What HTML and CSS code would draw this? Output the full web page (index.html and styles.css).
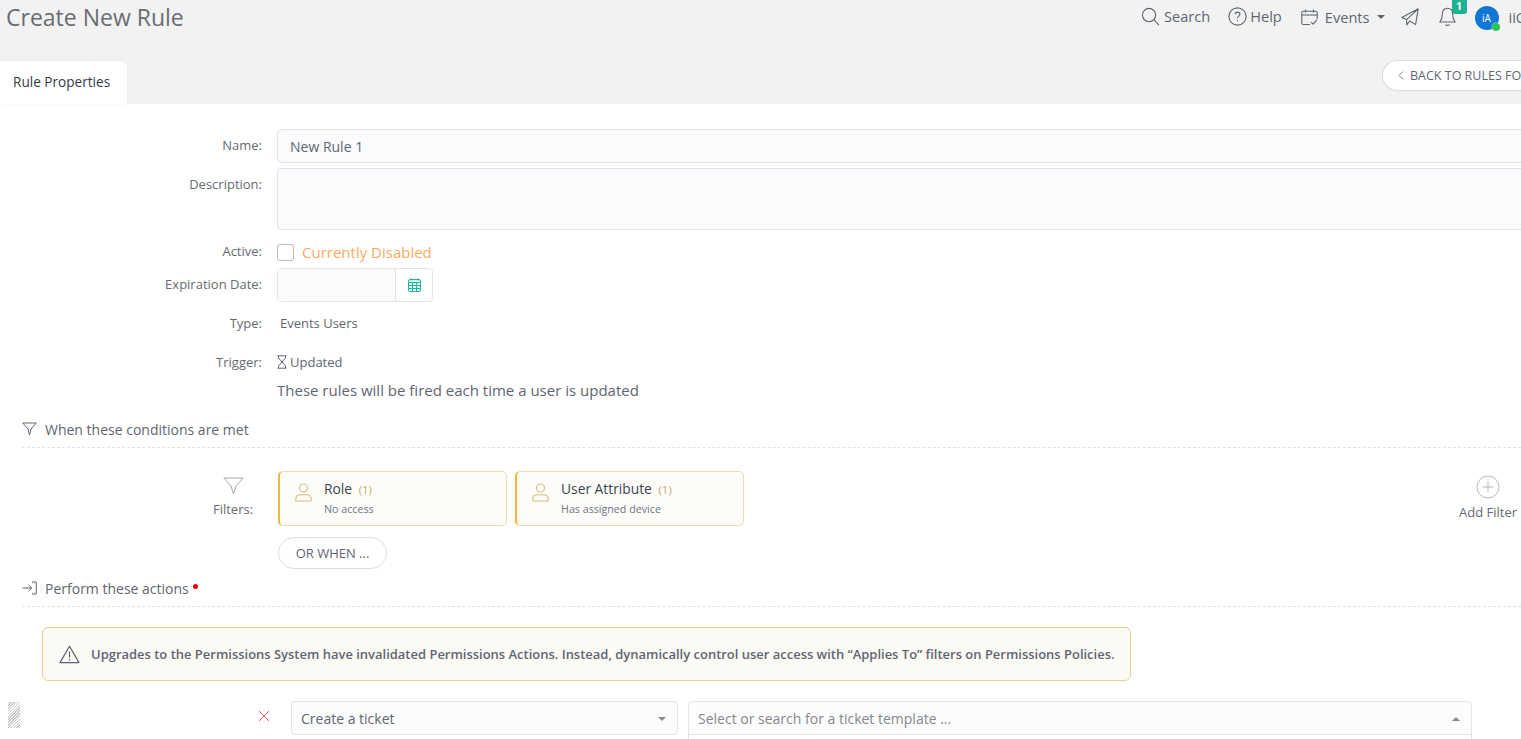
FILE: index.html
```html
<!DOCTYPE html>
<html lang="en">
<head>
  <meta charset="UTF-8" />
  <title>Create New Rule</title>
  <link rel="stylesheet" href="styles.css">
</head>
<body>
  <header class="topbar">
    <div class="title-row">
      <h1>Create New Rule</h1>
      <nav class="top-nav">
        <a class="nav-item nav-search">
          <svg width="19" height="19" viewBox="0 0 20 20" fill="none" stroke="#5f6672" stroke-width="1.2"><circle cx="8.5" cy="8.5" r="7"/><path d="M13.6 13.6 L19 19"/></svg>
          Search
        </a>
        <a class="nav-item nav-help">
          <svg width="19" height="19" viewBox="0 0 19 19" fill="none" stroke="#5f6672" stroke-width="1.1"><circle cx="9.5" cy="9.5" r="8.6"/><path d="M7.2 7.3 C7.2 4.4 11.9 4.4 11.9 7.3 C11.9 9.2 9.5 9.2 9.5 11.2"/><path d="M9.5 13 V14.2"/></svg>
          Help
        </a>
        <a class="nav-item nav-events">
          <svg width="17" height="17" viewBox="0 0 17 17" fill="none" stroke="#5f6672" stroke-width="1.1"><path d="M9 15.5 H2 A1.2 1.2 0 0 1 .8 14.3 V3.4 A1.2 1.2 0 0 1 2 2.2 H15 A1.2 1.2 0 0 1 16.2 3.4 V10"/><path d="M.8 6 H16.2"/><path d="M4.5 .5 V3.5 M12.5 .5 V3.5"/><path d="M10 13 L12 15.2 L16 10.8"/></svg>
          Events
          <span class="caret"></span>
        </a>
        <a class="nav-icon nav-send">
          <svg width="18" height="18" viewBox="0 0 18 18" fill="none" stroke="#5f6672" stroke-width="1.1" stroke-linejoin="round"><path d="M17.2 .8 L.8 9.6 L5.6 11.6 L17.2 .8 L14.6 16.6 L8.6 13 L5.8 16.8 L5.6 11.6"/></svg>
        </a>
        <a class="nav-icon nav-bell">
          <svg width="17" height="20" viewBox="0 0 17 20" fill="none" stroke="#5f6672" stroke-width="1.1" stroke-linejoin="round"><path d="M8.5 1.2 C4.8 1.2 3.4 4 3.4 7 C3.4 11 2.4 13 .8 15 H16.2 C14.6 13 13.6 11 13.6 7 C13.6 4 12.2 1.2 8.5 1.2 Z"/><path d="M6.4 17.6 C7.4 18.6 9.6 18.6 10.6 17.6"/></svg>
          <span class="badge">1</span>
        </a>
        <span class="avatar">iA<span class="status-dot"></span></span>
        <span class="user-name">iiQ Admin</span>
      </nav>
    </div>
    <div class="tab-row">
      <div class="tab">Rule Properties</div>
      <a class="back-btn">
        <svg width="6" height="9" viewBox="0 0 6 9" fill="none" stroke="#7a8290" stroke-width="1"><path d="M5 .5 L1 4.5 L5 8.5"/></svg>
        BACK TO RULES FOR EVENTS
      </a>
    </div>
  </header>

  <main class="content">
    <div class="form-row row-name">
      <label>Name:</label>
      <div class="text-input">New Rule 1</div>
    </div>
    <div class="form-row row-desc">
      <label>Description:</label>
      <div class="text-input text-area"></div>
    </div>
    <div class="form-row row-active">
      <label>Active:</label>
      <span class="checkbox"></span>
      <span class="disabled-text">Currently Disabled</span>
    </div>
    <div class="form-row row-date">
      <label>Expiration Date:</label>
      <div class="date-field">
        <span class="date-input"></span>
        <span class="date-btn">
          <svg width="13" height="14" viewBox="0 0 13 14" fill="#e3f6f2" stroke="#1fb5a0" stroke-width="1"><rect x=".5" y="1.5" width="12" height="12" rx="1.5"/><path d="M.5 4.5 H12.5 M.5 7.5 H12.5 M.5 10.5 H12.5 M4.5 4.5 V13.5 M8.5 4.5 V13.5"/><path d="M3 .3 V2.5 M10 .3 V2.5"/></svg>
        </span>
      </div>
    </div>
    <div class="form-row row-type">
      <label>Type:</label>
      <span class="plain-value">Events Users</span>
    </div>
    <div class="form-row row-trigger">
      <label>Trigger:</label>
      <span class="trigger-value">
        <svg width="10" height="14" viewBox="0 0 10 14" fill="none" stroke="#5f6672" stroke-width="1"><path d="M.5 .8 H9.5 M.5 13.2 H9.5"/><path d="M1.5 1 V3 L5 7 L8.5 3 V1"/><path d="M1.5 13 V11 L5 7 L8.5 11 V13"/></svg>
        Updated
      </span>
    </div>
    <p class="trigger-help">These rules will be fired each time a user is updated</p>

    <div class="section-head head-conditions">
      <svg width="15" height="14" viewBox="0 0 15 14" fill="none" stroke="#5f6672" stroke-width="1"><path d="M.8 1 H14.2 L9 7 L7.5 13 L6 7 Z"/></svg>
      When these conditions are met
    </div>

    <div class="filters-row">
      <div class="filters-label">
        <svg width="21" height="18" viewBox="0 0 21 18" fill="none" stroke="#a3a7ad" stroke-width="1"><path d="M.8 1 H20.2 L13 9 L10.5 17 L8 9 Z"/></svg>
        <span>Filters:</span>
      </div>
      <div class="filter-card">
        <svg class="person" width="17" height="19" viewBox="0 0 17 19" fill="none" stroke="#d8bd80" stroke-width="1.1"><circle cx="8.5" cy="5" r="4"/><path d="M.8 18 V16.2 C.8 13.4 3 11.8 5.5 11.8 H11.5 C14 11.8 16.2 13.4 16.2 16.2 V18 Z"/></svg>
        <div>
          <div class="card-title">Role <span class="card-count">(1)</span></div>
          <div class="card-sub">No access</div>
        </div>
      </div>
      <div class="filter-card">
        <svg class="person" width="17" height="19" viewBox="0 0 17 19" fill="none" stroke="#d8bd80" stroke-width="1.1"><circle cx="8.5" cy="5" r="4"/><path d="M.8 18 V16.2 C.8 13.4 3 11.8 5.5 11.8 H11.5 C14 11.8 16.2 13.4 16.2 16.2 V18 Z"/></svg>
        <div>
          <div class="card-title">User Attribute <span class="card-count">(1)</span></div>
          <div class="card-sub">Has assigned device</div>
        </div>
      </div>
      <div class="add-filter">
        <svg width="24" height="24" viewBox="0 0 24 24" fill="none" stroke="#b5b7ba" stroke-width="1"><circle cx="12" cy="12" r="11"/><path d="M12 6.5 V17.5 M6.5 12 H17.5"/></svg>
        <span>Add Filter</span>
      </div>
    </div>
    <div class="or-row"><button class="or-btn">OR WHEN ...</button></div>

    <div class="section-head head-actions">
      <svg width="15" height="14" viewBox="0 0 15 14" fill="none" stroke="#5f6672" stroke-width="1"><path d="M.5 7 H9.5 M6.5 3.8 L9.8 7 L6.5 10.2"/><path d="M10 1 H14.3 V13 H10"/></svg>
      Perform these actions <span class="req-dot"></span>
    </div>

    <div class="alert">
      <svg width="21" height="19" viewBox="0 0 21 19" fill="none" stroke="#5a6270" stroke-width="1.2" stroke-linejoin="round"><path d="M10.5 1.2 L20 17.6 H1 Z"/><path d="M10.5 6.5 V12.5 M10.5 14 V15.4"/></svg>
      <span>Upgrades to the Permissions System have invalidated Permissions Actions. Instead, dynamically control user access with “Applies To” filters on Permissions Policies.</span>
    </div>

    <div class="action-row">
      <span class="drag-handle"></span>
      <svg class="remove-x" width="12" height="12" viewBox="0 0 12 12" fill="none" stroke="#f0616d" stroke-width="1"><path d="M1 1 L11 11 M11 1 L1 11"/></svg>
      <div class="select select-type">Create a ticket<span class="caret caret-down"></span></div>
      <div class="select select-template">
        Select or search for a ticket template ...<span class="caret caret-up"></span>
        <div class="select-menu"></div>
      </div>
    </div>
  </main>
</body>
</html>
```

FILE: styles.css
```css
:root {
  --text-color: #5f6672;
  --label-color: #666b73;
  --field-bg: #fbfbfd;
  --field-border: #e3e4e8;
}

html, body {
  height: 739px;
  overflow: hidden;
}

body {
  margin: 0;
  background-color: #fff;
  font-family: "Open Sans", sans-serif;
  font-size: 13px;
  color: var(--text-color);
}

a {
  color: inherit;
  text-decoration: none;
}

svg {
  flex-shrink: 0;
}

/* top area */
.topbar {
  height: 104px;
  background-color: #f2f2f2;
}

.title-row {
  display: flex;
  justify-content: space-between;
  height: 61px;
}

h1 {
  margin: 0;
  padding: 1px 0 0 6px;
  font-size: 23px;
  line-height: 33px;
  font-weight: 400;
  color: #6a6d72;
}

.top-nav {
  display: flex;
  align-items: flex-start;
  height: 34px;
  white-space: nowrap;
  width: 380px;
  flex-shrink: 0;
  font-size: 14.6px;
}

.top-nav > * {
  flex-shrink: 0;
}

.nav-item {
  display: flex;
  align-items: center;
  height: 34px;
}

.nav-search { gap: 4px; margin-top: -1px; }
.nav-help { gap: 3px; margin: -1px 0 0 18px; }
.nav-events { gap: 7px; margin-left: 19px; }

.caret {
  display: inline-block;
  width: 0;
  height: 0;
  border-left: 4px solid transparent;
  border-right: 4px solid transparent;
  border-top: 4px solid #5f6672;
}

.nav-icon {
  position: relative;
  display: flex;
  align-items: center;
  height: 34px;
}

.nav-send { margin-left: 16px; }
.nav-bell { margin-left: 20px; }

.badge {
  position: absolute;
  top: 0;
  left: 13px;
  width: 15px;
  height: 14px;
  border-radius: 0 0 3px 3px;
  background-color: #1fb191;
  color: #fff;
  font-size: 10px;
  font-weight: 700;
  line-height: 13px;
  text-align: center;
}

.avatar {
  position: relative;
  margin: 6px 0 0 19px;
  width: 24px;
  height: 24px;
  border-radius: 50%;
  background-color: #0f78d4;
  color: #fff;
  font-size: 10px;
  line-height: 24px;
  text-align: center;
}

.status-dot {
  position: absolute;
  right: -1px;
  bottom: -1px;
  width: 8px;
  height: 8px;
  border-radius: 50%;
  background-color: #29c653;
  box-shadow: 0 0 0 1px rgba(255, 255, 255, 0.3);
}

.user-name {
  margin-left: 10px;
  line-height: 34px;
}

.tab-row {
  display: flex;
  justify-content: space-between;
  height: 43px;
}

.tab {
  padding: 0 17px 0 13px;
  background-color: #fff;
  border-radius: 0 6px 0 0;
  color: #333a45;
  font-size: 13.6px;
  line-height: 42px;
  box-shadow: 0 0 2px rgba(0, 0, 0, 0.08);
}

.back-btn {
  display: flex;
  align-items: center;
  gap: 6px;
  flex-shrink: 0;
  box-sizing: border-box;
  width: 139px;
  height: 31px;
  margin-top: -1px;
  padding-left: 15px;
  background-color: #fff;
  border: 1px solid #dcdcdc;
  border-right: none;
  border-radius: 16px 0 0 16px;
  font-size: 12.5px;
  white-space: nowrap;
  overflow: hidden;
}

/* form */
.content {
  padding-top: 25px;
}

.form-row {
  display: flex;
  align-items: center;
}

.form-row label {
  flex: 0 0 262px;
  text-align: right;
  margin-right: 15px;
  font-size: 13px;
  color: var(--label-color);
}

.row-name label,
.row-active label,
.row-date label {
  padding-bottom: 2px;
}

.text-input {
  box-sizing: border-box;
  flex: 1;
  height: 34px;
  margin-right: -20px;
  padding-left: 12px;
  background-color: var(--field-bg);
  border: 1px solid var(--field-border);
  border-radius: 4px;
  font-size: 14px;
  line-height: 33px;
  color: var(--text-color);
}

.row-desc {
  align-items: flex-start;
  margin-top: 5px;
}

.row-desc label {
  line-height: 33px;
}

.text-area {
  height: 62px;
}

.row-active {
  margin-top: 12px;
  height: 20px;
}

.checkbox {
  box-sizing: border-box;
  width: 17px;
  height: 17px;
  border: 1px solid #b9bbc0;
  border-radius: 3px;
  background-color: #fff;
}

.disabled-text {
  margin-left: 8px;
  font-size: 15px;
  color: #fcaa5f;
}

.row-date {
  margin-top: 6px;
}

.date-field {
  display: flex;
  box-sizing: border-box;
  width: 156px;
  height: 34px;
  border: 1px solid var(--field-border);
  border-radius: 4px;
}

.date-input {
  flex: 1;
  background-color: var(--field-bg);
  border-right: 1px solid var(--field-border);
}

.date-btn {
  display: flex;
  align-items: center;
  justify-content: center;
  width: 36px;
}

.row-type {
  margin-top: 12px;
  height: 18px;
}

.plain-value {
  margin-left: 3px;
  font-size: 13px;
}

.row-trigger {
  margin-top: 21px;
  height: 18px;
}

.trigger-value {
  display: flex;
  align-items: center;
  gap: 3px;
  font-size: 13px;
}

.trigger-help {
  margin: 9px 0 0 277px;
  font-size: 15px;
  line-height: 20px;
}

.section-head {
  display: flex;
  align-items: center;
  gap: 8px;
  margin-left: 22px;
  height: 36px;
  font-size: 14px;
  border-bottom: 1px dashed #e2e3e5;
}

.head-conditions {
  margin-top: 11px;
}

.req-dot {
  width: 5px;
  height: 5px;
  margin: -4px 0 0 -4px;
  border-radius: 50%;
  background-color: #f0000f;
}

/* filters */
.filters-row {
  display: flex;
  margin-top: 23px;
}

.filters-label {
  display: flex;
  flex-direction: column;
  align-items: center;
  gap: 5px;
  flex: 0 0 46px;
  margin: 6px 22px 0 210px;
  font-size: 13px;
  color: var(--label-color);
}

.filter-card {
  display: flex;
  gap: 12px;
  box-sizing: border-box;
  width: 229px;
  height: 55px;
  margin-right: 8px;
  padding: 7px 0 0 15px;
  background-color: #fdfcf9;
  border: 1px solid #eedcb2;
  border-left: 2px solid #f0b73d;
  border-radius: 5px;
}

.person {
  margin-top: 4px;
}

.card-title {
  font-size: 13.8px;
  line-height: 19px;
  color: #3c4350;
}

.card-count {
  margin-left: 3px;
  font-size: 11.5px;
  color: #c7ab6a;
}

.card-sub {
  margin-top: 3px;
  font-size: 10.7px;
  line-height: 14px;
  color: #6b7686;
}

.add-filter {
  display: flex;
  flex-direction: column;
  align-items: center;
  gap: 4px;
  margin: 4px 4px 0 auto;
  font-size: 13px;
  color: var(--label-color);
}

.or-row {
  margin: 11px 0 0 278px;
}

.or-btn {
  width: 109px;
  height: 32px;
  padding: 0;
  background-color: #fff;
  border: 1px solid #dedede;
  border-radius: 16px;
  font-family: inherit;
  font-size: 13px;
  color: var(--text-color);
}

.head-actions {
  margin-top: 1px;
}

.alert {
  display: flex;
  align-items: center;
  gap: 11px;
  box-sizing: border-box;
  width: 1089px;
  height: 54px;
  margin: 20px 0 0 42px;
  padding-left: 16px;
  background-color: #fcfaf5;
  border: 1px solid #edcf8b;
  border-radius: 6px;
  font-size: 12.97px;
  font-weight: 600;
  white-space: nowrap;
}

/* action row */
.action-row {
  display: flex;
  align-items: flex-start;
  margin-top: 20px;
}

.drag-handle {
  width: 12px;
  height: 26px;
  margin: 1px 0 0 8px;
  background-image: repeating-linear-gradient(135deg, #c8c8c8 0 1px, #fff 1px 2px);
}

.remove-x {
  margin: 9px 0 0 238px;
}

.select {
  box-sizing: border-box;
  height: 34px;
  background-color: #fcfcfc;
  border: 1px solid var(--field-border);
  border-radius: 4px;
  line-height: 33px;
  position: relative;
}

.select-type {
  width: 387px;
  margin-left: 21px;
  padding-left: 9px;
  font-size: 14px;
}

.select-template {
  width: 784px;
  margin-left: 10px;
  padding-left: 9px;
  font-size: 14px;
  color: #84888e;
  border-radius: 4px 4px 0 0;
}

.select-menu {
  position: absolute;
  top: 32px;
  left: -1px;
  right: -1px;
  height: 4px;
  background-color: #fff;
  border: 1px solid var(--field-border);
  border-bottom: none;
}

.caret-down,
.caret-up {
  position: absolute;
  right: 11px;
  top: 15px;
}

.caret-down {
  border-top-color: #858a91;
}

.caret-up {
  border-top: none;
  border-bottom: 4px solid #858a91;
}
```
